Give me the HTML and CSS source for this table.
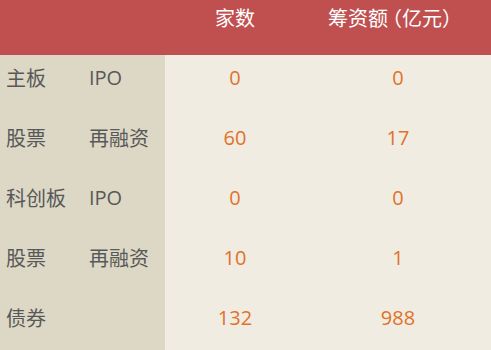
FILE: index.html
```html
<!DOCTYPE html>
<html lang="zh">
<head>
<meta charset="utf-8">
<link rel="stylesheet" href="styles.css">
</head>
<body>
<div class="table">
  <div class="head">
    <div class="h"></div>
    <div class="h"></div>
    <div class="h num">家数</div>
    <div class="h num amt">筹资额<span class="p po">（</span>亿元<span class="p pc">）</span></div>
  </div>
  <div class="row"><div class="c1">主板</div><div class="c2">IPO</div><div class="v">0</div><div class="v">0</div></div>
  <div class="row"><div class="c1">股票</div><div class="c2">再融资</div><div class="v">60</div><div class="v">17</div></div>
  <div class="row"><div class="c1">科创板</div><div class="c2">IPO</div><div class="v">0</div><div class="v">0</div></div>
  <div class="row"><div class="c1">股票</div><div class="c2">再融资</div><div class="v">10</div><div class="v">1</div></div>
  <div class="row"><div class="c1">债券</div><div class="c2"></div><div class="v">132</div><div class="v">988</div></div>
</div>
</body>
</html>
```
FILE: styles.css
```css
html, body { margin: 0; padding: 0; }
body {
  width: 491px;
  height: 350px;
  overflow: hidden;
  background: #f0ece2;
  font-family: "Open Sans", "Noto Sans CJK SC", sans-serif;
  font-size: 20px;
}
.table { display: flex; flex-direction: column; }
.head, .row {
  display: grid;
  grid-template-columns: 89px 76px 140px 186px;
}
.head {
  height: 55px;
  background: #c0504f;
  color: #ffffff;
}
.h { padding-top: 6px; line-height: 26px; white-space: nowrap; }
.num { text-align: center; }
.amt { padding-right: 12px; }
.p { font-feature-settings: "halt"; }
.po { padding-left: 4px; }
.pc { padding-right: 4px; }
.row { height: 60px; }
.c1, .c2, .v {
  height: 100%;
  box-sizing: border-box;
  padding-bottom: 15px;
  display: flex;
  align-items: center;
}
.c1, .c2 {
  background: #ddd8c5;
  color: #585858;
}
.c1 { padding-left: 6px; }
.v { justify-content: center; color: #e0722a; }
```
